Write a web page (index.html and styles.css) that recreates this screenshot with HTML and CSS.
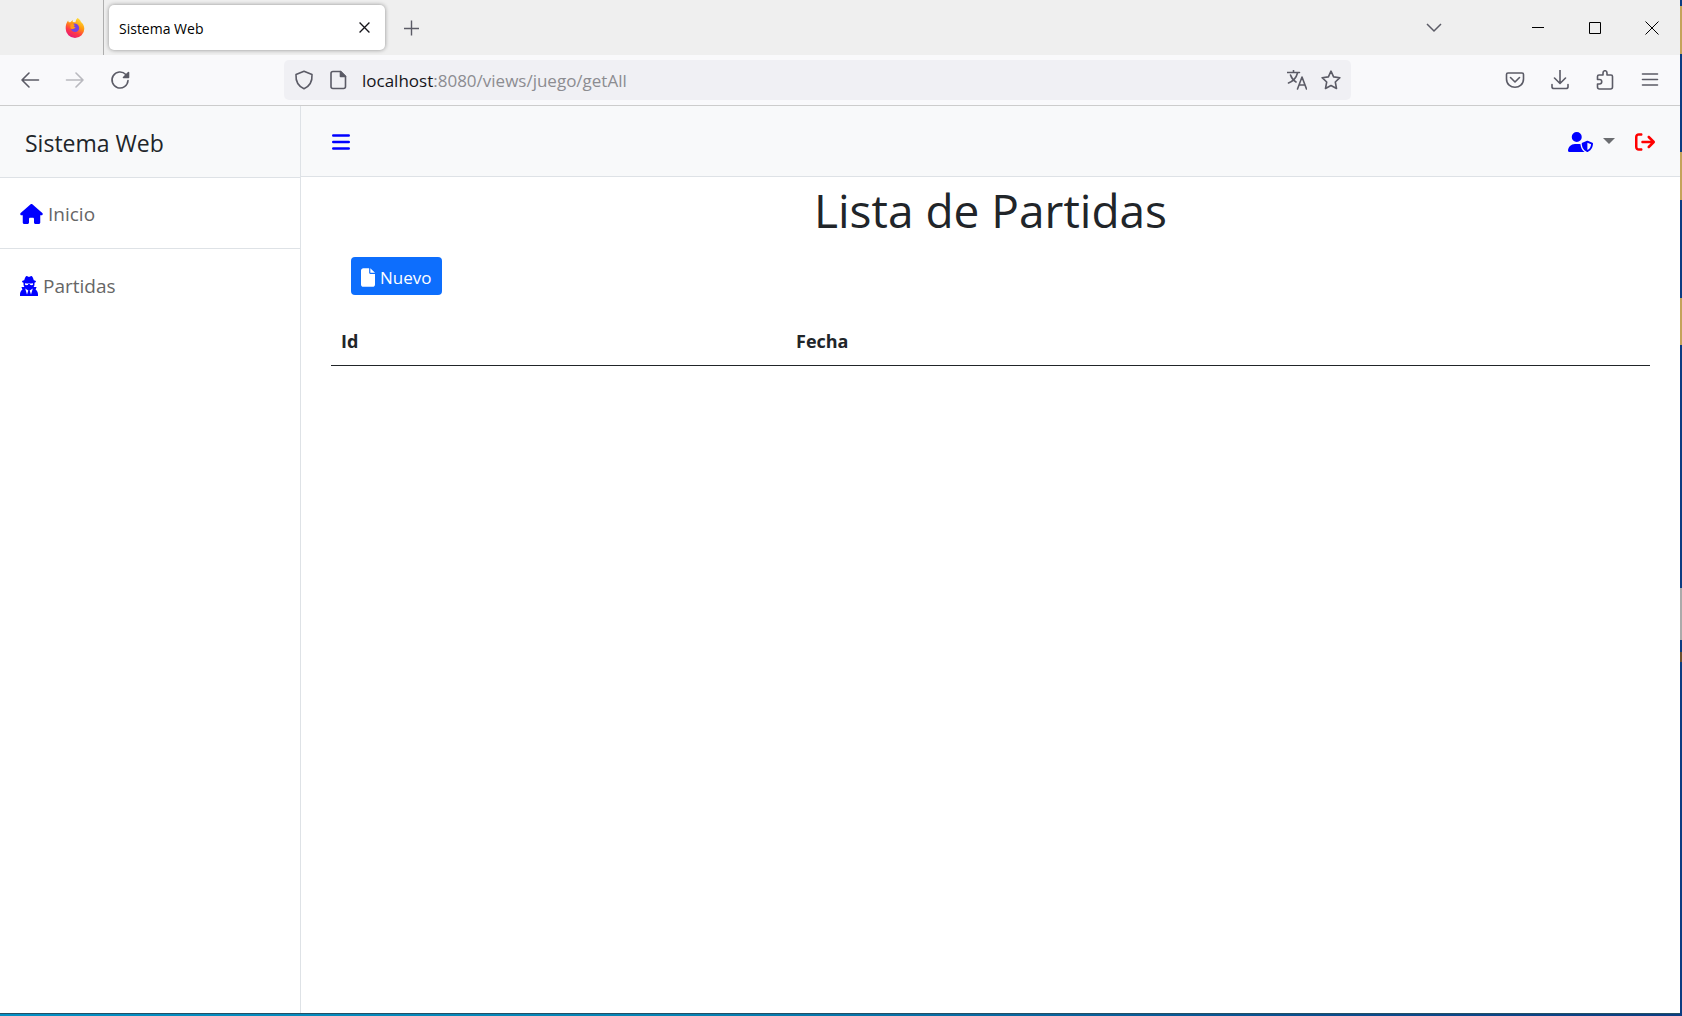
FILE: index.html
```html
<!DOCTYPE html>
<html lang="es">
<head>
<meta charset="utf-8">
<title>Sistema Web</title>
<meta name="viewport" content="width=device-width, initial-scale=1">
<link rel="stylesheet" href="styles.css">
</head>
<body>
<div class="desktop">
<div class="window">
  <header class="browser">
    <div class="tabs">
      <div class="pinned">
        <svg class="firefox" viewBox="0 0 20 20" aria-hidden="true">
          <defs>
            <linearGradient id="flame" x1="0.8" y1="0" x2="0.3" y2="1"><stop offset="0" stop-color="#ffe83b"/><stop offset="0.4" stop-color="#ff980e"/><stop offset="0.7" stop-color="#ff3b45"/><stop offset="1" stop-color="#e5167a"/></linearGradient>
          </defs>
          <path fill="url(#flame)" d="M12.6 0c2 1.300 3 2.700 3.400 4 1.900 1.400 3.300 4 3.300 6.700A9.300 9.300 0 0 1 .7 10.700C.6 7.700 1.200 5.400 2.200 4l.9-1.600.6 1.900 1.700-.1 2.400-2.200-.1 2 2.800.3C10.600 2.800 11.200 1.200 12.600 0z"/>
          <path fill="#7543e3" d="M7.400 6.200c2.200-1.700 6.100-.4 6.700 3 .4 2.800-1.600 4.800-4 4.800-2.300 0-4-1.400-4.200-3.300 1 .7 2 .6 3.200-.1 1-.6.900-1 .3-1.200-1-.2-1.900-.1-2.300-1-.3-.7-.2-1.600.300-2.200z"/>
          <path fill="#ff9a1a" d="M5.500 6.400 8 5.800l2 1.500c-.8.200-1.300.8-1.100 1.400l1.600.4c-.2 1.200-1.800 1.400-2.600 1.900-1.200.3-2.200-.3-2.500-1.300z"/>
        </svg>
      </div>
      <div class="tab">
        <span class="tab-title">Sistema Web</span>
        <button class="tab-close" aria-label="Cerrar pestaña"><svg viewBox="0 0 10 10"><path d="M.5.5l9 9m0-9l-9 9"/></svg></button>
      </div>
      <button class="tab-new" aria-label="Nueva pestaña"><svg viewBox="0 0 16 16"><path d="M7.500.5v15M0 8.500h15"/></svg></button>
      <div class="controls">
        <button aria-label="Listar pestañas"><svg class="list-tabs" viewBox="0 0 16 16"><path d="M1 4l7 7 7-7"/></svg></button>
        <button aria-label="Minimizar"><svg viewBox="0 0 12 12"><path d="M0 5.500h12"/></svg></button>
        <button aria-label="Maximizar"><svg viewBox="0 0 12 12"><path d="M.5.5h11v11H.5z"/></svg></button>
        <button aria-label="Cerrar"><svg class="close" viewBox="0 0 14 14"><path d="M.5.5l13 13m0-13l-13 13"/></svg></button>
      </div>
    </div>
    <div class="toolbar">
      <div class="history">
        <button aria-label="Atrás"><svg viewBox="0 0 20 20"><path d="M18.500 10H2m7-7-7 7 7 7"/></svg></button>
        <button aria-label="Adelante" disabled><svg viewBox="0 0 20 20"><path d="M1.500 10H18m-7-7 7 7-7 7"/></svg></button>
        <button aria-label="Recargar"><svg viewBox="0 0 20 20"><path d="M18 10.500A8 8 0 1 1 15.800 4.500"/><path class="solid" d="M18.500 2.500V7.500h-5z"/></svg></button>
      </div>
      <div class="address">
        <svg viewBox="0 0 20 20" aria-hidden="true"><path d="M10 1.200l8 3.300c.4 6.200-1.500 11.300-8 14.300C3.500 15.800 1.600 10.700 2 4.500z"/></svg>
        <svg viewBox="0 0 20 20" aria-hidden="true"><path d="M5 1.500h7.500l5 5v10q0 2-2 2H5q-2 0-2-2v-13q0-2 2-2z"/><path class="solid" d="M12.500 1.500v5h5z"/></svg>
        <a class="url" href="#"><span class="host">localhost</span>:8080/views/juego/getAll</a>
        <button aria-label="Traducir"><svg viewBox="0 0 20 20"><path d="M.5 2.500h12M6.500.5v2M10.500 3C9.500 7 6.500 11 1.500 13M3.500 5c1 3 3 5.500 5.500 7M10.500 19l4.500-12 4.500 12M12 15h6"/></svg></button>
        <button aria-label="Marcador"><svg viewBox="0 0 20 20"><path d="M10 1.200l2.600 5.700 6.300.8-4.600 4.300 1.200 6.500L10 15.500l-5.500 3L5.700 12 1.100 7.700l6.300-.8z"/></svg></button>
      </div>
      <div class="tools">
        <button aria-label="Pocket"><svg viewBox="0 0 20 20"><path d="M3 3h14q1.500 0 1.500 1.500V9c0 11-17 11-17 0V4.500Q1.500 3 3 3zm2.500 4.500L10 12l4.500-4.500"/></svg></button>
        <button aria-label="Descargas"><svg viewBox="0 0 20 20"><path d="M10 0v13M4.500 8l5.500 5.500L15.500 8M2 14.500V17q0 1.500 2 1.500h12q2 0 2-1.500v-2.500"/></svg></button>
        <button aria-label="Extensiones"><svg viewBox="0 0 20 20"><path d="M2.500 9V6.500q0-1.500 1.500-1.500h4V3c0-3 4-3 4 0v2h4q1.500 0 1.500 1.500V17q0 2-2 2h-11q-2 0-2-2v-3h2c3 0 3-4.500 0-4.500h-2z"/></svg></button>
        <button aria-label="Menú"><svg viewBox="0 0 20 20"><path d="M2.500 4h15m-15 5.500h15m-15 5.500h15"/></svg></button>
      </div>
    </div>
  </header>

  <div class="page">
    <aside class="sidebar">
      <div class="brand">Sistema Web</div>
      <nav>
        <a href="#" class="item"><svg class="house" viewBox="0 0 576 512" aria-hidden="true"><path d="M575.8 255.5c0 18-15 32.100-32 32.100h-32l.7 160.200V472c0 22.100-17.900 40-40 40H392c-22.100 0-40-17.900-40-40v-88c0-17.700-14.300-32-32-32h-64c-17.700 0-32 14.300-32 32v88c0 22.100-17.900 40-40 40h-80c-22.100 0-40-17.900-40-40V287.600H32c-18 0-32-14-32-32.100 0-9 3-17 10-24L266.400 8c7-7 15-8 22-8s15 2 21 7l255.400 224.500c8 7 12 15 11 24z"/></svg>Inicio</a>
        <a href="#" class="item"><svg class="spy" viewBox="0 0 18 20" aria-hidden="true"><path fill-rule="evenodd" d="M6 .3q.7-.5 1.400 0L9 1l1.600-.7q.7-.5 1.400 0Q13 1.500 13.800 4.300c1.500.4 2.200.8 2.200 1.300s-.7.900-1.500 1.200v1.400c0 1-.3 2-.9 2.800h3l-1 2.500c1.600 1 2.400 3 2.400 5V20H0v-1.500c0-2 .8-4 2.400-5L1.400 11h3c-.6-.8-.9-1.800-.9-2.800V6.800C2.700 6.500 2 6.100 2 5.600s.7-.9 2.200-1.300Q5 1.500 6 .3zM5 7.300v1.200c.4 1 2.800 1 3.300-.5h1.400c.5 1.500 2.900 1.500 3.300.5V7.300C10.500 7.700 7.500 7.700 5 7.300zM5.200 12.500 7 18.500l1.300-4zM12.800 12.500 9.700 14.500l1.300 4z"/></svg>Partidas</a>
      </nav>
    </aside>
    <div class="content">
      <div class="navbar">
        <button class="toggle" aria-label="Alternar menú"><svg class="bars" viewBox="0 0 18 16"><path d="M1.300 1.500h15.400M1.300 8h15.400M1.300 14.500h15.400"/></svg></button>
        <button class="user" aria-label="Usuario"><svg class="shield" viewBox="0 0 640 512"><path d="M224 256A128 128 0 1 0 224 0a128 128 0 1 0 0 256zm-45.700 48C79.800 304 0 383.800 0 482.300 0 498.700 13.300 512 29.700 512h388.600c1.800 0 3.500-.2 5.300-.5-76.300-55.100-99.800-141-103.100-200.200-16.100-4.800-33.100-7.300-50.700-7.300zm308.800-78.300l-120 48C358 277.400 352 286.200 352 296c0 63.300 25.900 168.800 134.800 214.200 5.900 2.500 12.600 2.500 18.500 0C614.100 464.800 640 359.300 640 296c0-9.800-6-18.600-15.100-22.300l-120-48c-5.700-2.300-12.100-2.300-17.800 0zM591.400 312c-3.900 50.700-27.200 116.700-95.400 149.700V273.800z"/></svg><span class="caret"></span></button>
        <a class="logout" href="#" aria-label="Salir"><svg viewBox="0 0 512 512"><path d="M502.600 278.600c12.500-12.500 12.500-32.800 0-45.300l-128-128c-12.500-12.500-32.800-12.500-45.300 0s-12.500 32.800 0 45.300l73.400 73.400H192c-17.700 0-32 14.300-32 32s14.300 32 32 32h210.700l-73.400 73.400c-12.500 12.500-12.500 32.800 0 45.300s32.800 12.500 45.300 0zM160 96c17.700 0 32-14.300 32-32s-14.300-32-32-32H96C43 32 0 75 0 128v256c0 53 43 96 96 96h64c17.700 0 32-14.300 32-32s-14.300-32-32-32H96c-17.700 0-32-14.300-32-32V128c0-17.700 14.300-32 32-32z"/></svg></a>
      </div>
      <main>
        <h1>Lista de Partidas</h1>
        <button class="new"><svg viewBox="0 0 384 512" aria-hidden="true"><path d="M0 64C0 28.700 28.700 0 64 0h160v128c0 17.700 14.300 32 32 32h128v288c0 35.300-28.700 64-64 64H64c-35.300 0-64-28.700-64-64zm384 64H256V0z"/></svg>Nuevo</button>
        <table>
          <thead><tr><th class="id" scope="col">Id</th><th scope="col">Fecha</th></tr></thead>
          <tbody></tbody>
        </table>
      </main>
    </div>
  </div>
</div>
</div>
</body>
</html>
```
FILE: styles.css
```css
* { box-sizing: border-box; }
body { margin: 0; font-family: "Open Sans", "Noto Sans", sans-serif; color: #212529; }
button { border: 0; padding: 0; background: none; font: inherit; color: inherit; display: flex; align-items: center; justify-content: center; }
svg { display: block; flex: none; }
a { color: inherit; text-decoration: none; }

.desktop {
  min-height: 100vh;
  display: flex;
  padding: 0 2px 2px 0;
  background:
    linear-gradient(90deg, #048fc4, #0683b4 40%, #0a4b8c 80%, #0b3d82) bottom / 100% 2px no-repeat,
    linear-gradient(#0b3d82 6px, #c4a35a 6px 54px, #0b3d82 54px 152px, #c4a35a 152px 200px, #0b3d82 200px 298px, #c4a35a 298px 345px, #0b3d82 345px 588px, #aaa 588px 640px, #0b3d82 640px 652px, #6b5030 652px 662px, #0b3d82 662px);
}
.window { flex: 1; display: flex; flex-direction: column; background: #fff; border-bottom: 1px solid #245066; }

.tabs { height: 55px; display: flex; align-items: center; background: #efefef; color: #000; }
.pinned { width: 104px; align-self: stretch; display: flex; align-items: center; justify-content: flex-end; padding-right: 18px; border-right: 1px solid #aeaeae; }
.firefox { width: 20px; height: 20px; }
.tab { width: 276px; height: 45px; margin-left: 5px; padding: 0 15px 0 10px; display: flex; align-items: center; justify-content: space-between; background: #fff; border-radius: 5px; box-shadow: 0 0 4px rgba(0, 0, 0, .4); }
.tab-title { font-size: 14px; padding-top: 2px; }
.tabs svg, .toolbar svg { fill: none; stroke: #5b5b66; }
.tabs .firefox { stroke: none; }
.tab-close svg { width: 11px; height: 11px; stroke: #15141a; stroke-width: 1.2; }
.tab-new { margin-left: 19px; }
.tab-new svg { width: 16px; height: 16px; stroke-width: 1.4; }
.controls { margin-left: auto; display: flex; }
.controls button { width: 57px; height: 54px; }
.controls button:first-child { margin-right: 47px; }
.controls svg { width: 12px; height: 12px; stroke: #000; }
.controls .list-tabs { width: 16px; height: 16px; stroke: #5b5b66; stroke-width: 1.5; }
.controls .close { width: 14px; height: 14px; }

.toolbar { height: 51px; display: flex; align-items: center; background: #f9f9fb; border-bottom: 1px solid #ccc; }
.toolbar svg { width: 20px; height: 20px; stroke-width: 1.6; stroke-linejoin: round; stroke-linecap: round; }
.toolbar .solid { fill: #5b5b66; }
.history { width: 284px; padding-left: 20px; display: flex; gap: 25px; }
.history button:disabled { opacity: .4; }
.address { flex: 1; height: 40px; padding: 0 10px; display: flex; align-items: center; gap: 14px; border-radius: 5px; background: #f0f0f4; }
.url { flex: 1; padding-top: 2px; font-size: 17px; line-height: 24px; color: #8c8c91; }
.host { color: #15141a; }
.tools { width: 329px; padding-right: 20px; display: flex; justify-content: flex-end; gap: 25px; }

.page { flex: 1; display: flex; }
.sidebar { width: 301px; border-right: 1px solid #dee2e6; }
.brand { height: 72px; padding: 2px 25px 0; display: flex; align-items: center; background: #f8f9fa; border-bottom: 1px solid #dee2e6; font-size: 23px; }
.item { height: 71px; padding: 2px 20px 0; display: flex; align-items: center; gap: 5px; font-size: 19px; color: #666; border-bottom: 1px solid #dee2e6; }
.item:last-child { border-bottom: 0; }
.item svg { fill: #00f; }
.house { width: 23px; height: 20px; }
.spy { width: 18px; height: 20px; }
.content { flex: 1; }
.navbar { height: 71px; padding: 2px 25px 0 31px; display: flex; align-items: center; background: #f8f9fa; border-bottom: 1px solid #dee2e6; }
.bars { width: 18px; height: 16px; stroke: #00f; stroke-width: 2.6; stroke-linecap: round; }
.user { margin-left: auto; gap: 10px; }
.shield { width: 25px; height: 20px; fill: #00f; }
.caret { margin-bottom: 2px; border: 6px solid transparent; border-top-color: #6b6d70; border-bottom: 0; }
.logout { margin-left: 20px; }
.logout svg { width: 20px; height: 20px; fill: #f00; }

main { padding: 0 30px; }
h1 { margin: 3px 0 17px; font-size: 46px; line-height: 60px; font-weight: 400; text-align: center; }
.new { height: 38px; margin-left: 20px; padding: 2px 10px 0; gap: 5px; border-radius: 4px; background: #0d6efd; color: #fff; font-size: 17px; }
.new svg { width: 14px; height: 19px; fill: #fff; }
table { width: 100%; margin-top: 23px; border-collapse: collapse; table-layout: fixed; }
th { height: 47px; padding: 0 10px; text-align: left; font-size: 18px; font-weight: 700; border-bottom: 1px solid #212529; }
.id { width: 455px; }
```
